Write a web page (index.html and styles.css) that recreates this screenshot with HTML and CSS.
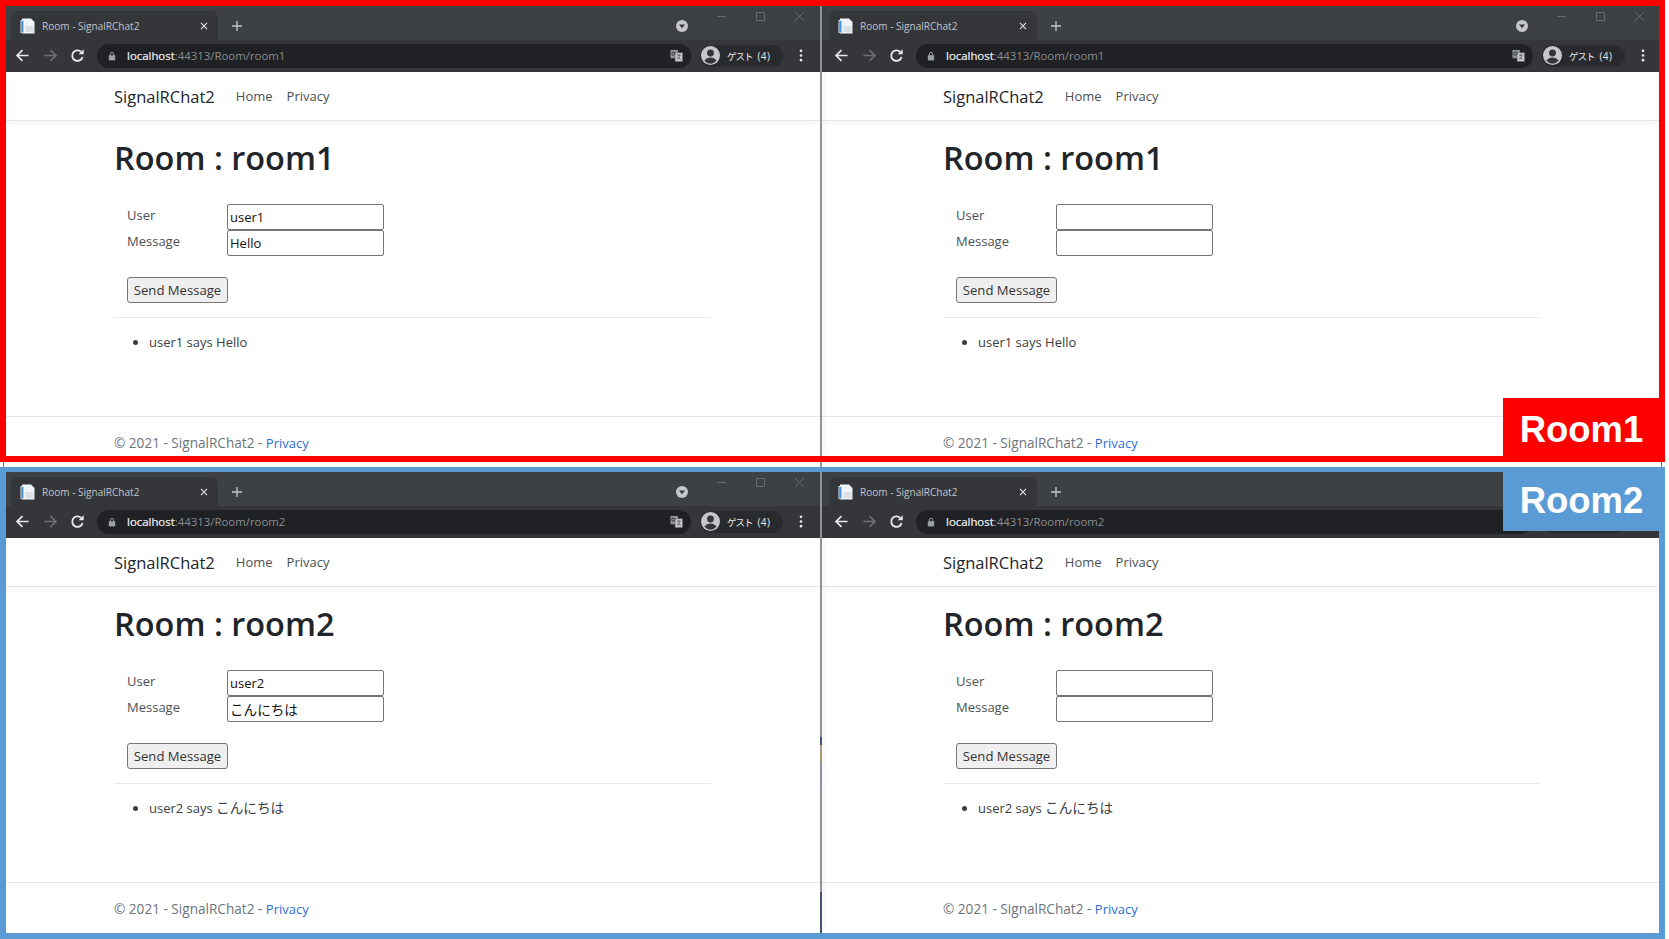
FILE: index.html
```html
<!DOCTYPE html>
<html lang="ja">
<head>
<meta charset="utf-8">
<title>Room - SignalRChat2</title>
<link rel="stylesheet" href="styles.css">
</head>
<body>
<svg class="sprites" width="0" height="0" aria-hidden="true">
  <symbol id="i-fav" viewBox="0 0 15 16">
    <path d="M2 0.5h9l3.5 3.5v11.5H2z" fill="#f1f4f7"/>
    <path d="M0.5 2H4v13H0.5z" fill="#dbe7f2"/>
    <path d="M1.2 3H3.4v11.4H1.2z" fill="#4a97d6"/>
    <path d="M5.5 9h8M5.5 11h8M5.5 13h8" stroke="#c3ccd5" stroke-width="1"/>
  </symbol>
  <symbol id="i-back" viewBox="0 0 16 16">
    <path d="M14.5 8H2.5M8 2.2 2.2 8 8 13.8" fill="none" stroke="currentColor" stroke-width="1.8"/>
  </symbol>
  <symbol id="i-forward" viewBox="0 0 16 16">
    <path d="M1.5 8h12M8 2.2 13.8 8 8 13.8" fill="none" stroke="currentColor" stroke-width="1.8"/>
  </symbol>
  <symbol id="i-reload" viewBox="0 0 16 16">
    <path d="M13.4 9.5A5.6 5.6 0 1 1 12 4.2" fill="none" stroke="currentColor" stroke-width="2"/>
    <path d="M9.2 6.6h5.4V1.2z" fill="currentColor"/>
  </symbol>
  <symbol id="i-lock" viewBox="0 0 10 12">
    <path d="M1 5h8v6.5H1z" fill="currentColor"/>
    <path d="M3 5V3.4a2 2 0 0 1 4 0V5" fill="none" stroke="currentColor" stroke-width="1.2"/>
  </symbol>
  <symbol id="i-translate" viewBox="0 0 14 14">
    <path d="M0.5 1h8v9h-8z" fill="#8f9499"/>
    <path d="M5.5 4h8v9.5h-8z" fill="#c9ccd0" stroke="#5f6368" stroke-width=".6"/>
    <path d="M7.5 6.5h4M9.5 6v1.2M10.8 7c-.4 2-2 3.4-3.4 4M8 8.2c.6 1.2 2 2.4 3.6 3" fill="none" stroke="#3c4043" stroke-width=".8"/>
    <circle cx="3.6" cy="5" r="1.7" fill="none" stroke="#202124" stroke-width=".9"/>
  </symbol>
  <symbol id="i-user" viewBox="0 0 20 20">
    <circle cx="10" cy="10" r="10" fill="#c4c7cb"/>
    <circle cx="10" cy="7.4" r="3.6" fill="#35363a"/>
    <path d="M3.6 15.6C5 12.8 7.6 12 10 12s5 .8 6.4 3.6A8.6 8.6 0 0 1 10 18.6a8.6 8.6 0 0 1-6.4-3z" fill="#35363a"/>
  </symbol>
  <symbol id="i-dots" viewBox="0 0 4 14">
    <circle cx="2" cy="2" r="1.4" fill="currentColor"/>
    <circle cx="2" cy="7" r="1.4" fill="currentColor"/>
    <circle cx="2" cy="12" r="1.4" fill="currentColor"/>
  </symbol>
  <symbol id="i-drop" viewBox="0 0 12 12">
    <circle cx="6" cy="6" r="6" fill="#c4c7cb"/>
    <path d="M3 4.6h6L6 8.2z" fill="#35363a"/>
  </symbol>
  <symbol id="i-x" viewBox="0 0 10 10">
    <path d="M1.2 1.2l7.6 7.6M8.8 1.2 1.2 8.8" fill="none" stroke="currentColor" stroke-width="1.4"/>
  </symbol>
  <symbol id="i-plus" viewBox="0 0 10 10">
    <path d="M5 0v10M0 5h10" fill="none" stroke="currentColor" stroke-width="1.3"/>
  </symbol>
  <symbol id="i-min" viewBox="0 0 10 10">
    <path d="M0 5h10" stroke="currentColor" stroke-width="1"/>
  </symbol>
  <symbol id="i-max" viewBox="0 0 10 10">
    <path d="M.5.5h9v9h-9z" fill="none" stroke="currentColor" stroke-width="1"/>
  </symbol>
  <symbol id="i-close" viewBox="0 0 10 10">
    <path d="M0 0l10 10M10 0 0 10" fill="none" stroke="currentColor" stroke-width="1"/>
  </symbol>
</svg>

<div class="frame frame-red">
  <section class="win win-a">
    <div class="tabstrip">
      <div class="tab"><svg class="fav"><use href="#i-fav"/></svg><span class="tab-title">Room - SignalRChat2</span><svg class="tab-x"><use href="#i-x"/></svg></div>
      <svg class="plus"><use href="#i-plus"/></svg>
      <svg class="drop"><use href="#i-drop"/></svg>
      <div class="controls"><svg class="ctl"><use href="#i-min"/></svg><svg class="ctl"><use href="#i-max"/></svg><svg class="ctl"><use href="#i-close"/></svg></div>
    </div>
    <div class="toolbar">
      <svg class="nav-ic"><use href="#i-back"/></svg><svg class="nav-ic dim"><use href="#i-forward"/></svg><svg class="nav-ic"><use href="#i-reload"/></svg>
      <div class="omni"><svg class="lock"><use href="#i-lock"/></svg><span class="url"><b>localhost</b>:44313/Room/room1</span><svg class="trans"><use href="#i-translate"/></svg></div>
      <div class="pill"><svg class="user"><use href="#i-user"/></svg><span class="who">ゲスト</span><span class="cnt">(4)</span></div>
      <svg class="dots"><use href="#i-dots"/></svg>
    </div>
    <nav class="navbar"><div class="container nav-row"><span class="brand">SignalRChat2</span><span class="nav-link">Home</span><span class="nav-link">Privacy</span></div></nav>
    <main class="container">
      <h1>Room : room1</h1>
      <div class="form-grid"><span class="lbl">User</span><input class="field" value="user1"><span class="lbl">Message</span><input class="field" value="Hello"></div>
      <button class="send">Send Message</button>
      <hr class="rule">
      <ul class="msgs"><li>user1 says Hello</li></ul>
    </main>
    <footer class="foot"><div class="container">© 2021 - SignalRChat2 - <a class="foot-link">Privacy</a></div></footer>
  </section>
  <div class="divider"></div>
  <section class="win win-b">
    <div class="tabstrip">
      <div class="tab"><svg class="fav"><use href="#i-fav"/></svg><span class="tab-title">Room - SignalRChat2</span><svg class="tab-x"><use href="#i-x"/></svg></div>
      <svg class="plus"><use href="#i-plus"/></svg>
      <svg class="drop"><use href="#i-drop"/></svg>
      <div class="controls"><svg class="ctl"><use href="#i-min"/></svg><svg class="ctl"><use href="#i-max"/></svg><svg class="ctl"><use href="#i-close"/></svg></div>
    </div>
    <div class="toolbar">
      <svg class="nav-ic"><use href="#i-back"/></svg><svg class="nav-ic dim"><use href="#i-forward"/></svg><svg class="nav-ic"><use href="#i-reload"/></svg>
      <div class="omni"><svg class="lock"><use href="#i-lock"/></svg><span class="url"><b>localhost</b>:44313/Room/room1</span><svg class="trans"><use href="#i-translate"/></svg></div>
      <div class="pill"><svg class="user"><use href="#i-user"/></svg><span class="who">ゲスト</span><span class="cnt">(4)</span></div>
      <svg class="dots"><use href="#i-dots"/></svg>
    </div>
    <nav class="navbar"><div class="container nav-row"><span class="brand">SignalRChat2</span><span class="nav-link">Home</span><span class="nav-link">Privacy</span></div></nav>
    <main class="container">
      <h1>Room : room1</h1>
      <div class="form-grid"><span class="lbl">User</span><input class="field"><span class="lbl">Message</span><input class="field"></div>
      <button class="send">Send Message</button>
      <hr class="rule">
      <ul class="msgs"><li>user1 says Hello</li></ul>
    </main>
    <footer class="foot"><div class="container">© 2021 - SignalRChat2 - <a class="foot-link">Privacy</a></div></footer>
  </section>
  <div class="badge badge-red">Room1</div>
</div>

<div class="gap"><i class="tick tick-1"></i><i class="tick tick-2"></i><i class="tick tick-3"></i></div>

<div class="frame frame-blue">
  <section class="win win-a">
    <div class="tabstrip">
      <div class="tab"><svg class="fav"><use href="#i-fav"/></svg><span class="tab-title">Room - SignalRChat2</span><svg class="tab-x"><use href="#i-x"/></svg></div>
      <svg class="plus"><use href="#i-plus"/></svg>
      <svg class="drop"><use href="#i-drop"/></svg>
      <div class="controls"><svg class="ctl"><use href="#i-min"/></svg><svg class="ctl"><use href="#i-max"/></svg><svg class="ctl"><use href="#i-close"/></svg></div>
    </div>
    <div class="toolbar">
      <svg class="nav-ic"><use href="#i-back"/></svg><svg class="nav-ic dim"><use href="#i-forward"/></svg><svg class="nav-ic"><use href="#i-reload"/></svg>
      <div class="omni"><svg class="lock"><use href="#i-lock"/></svg><span class="url"><b>localhost</b>:44313/Room/room2</span><svg class="trans"><use href="#i-translate"/></svg></div>
      <div class="pill"><svg class="user"><use href="#i-user"/></svg><span class="who">ゲスト</span><span class="cnt">(4)</span></div>
      <svg class="dots"><use href="#i-dots"/></svg>
    </div>
    <nav class="navbar"><div class="container nav-row"><span class="brand">SignalRChat2</span><span class="nav-link">Home</span><span class="nav-link">Privacy</span></div></nav>
    <main class="container">
      <h1>Room : room2</h1>
      <div class="form-grid"><span class="lbl">User</span><input class="field" value="user2"><span class="lbl">Message</span><input class="field field-ja" value="こんにちは"></div>
      <button class="send">Send Message</button>
      <hr class="rule">
      <ul class="msgs"><li>user2 says <span class="ja">こんにちは</span></li></ul>
    </main>
    <footer class="foot"><div class="container">© 2021 - SignalRChat2 - <a class="foot-link">Privacy</a></div></footer>
  </section>
  <div class="divider divider-dark"></div>
  <section class="win win-b">
    <div class="tabstrip">
      <div class="tab"><svg class="fav"><use href="#i-fav"/></svg><span class="tab-title">Room - SignalRChat2</span><svg class="tab-x"><use href="#i-x"/></svg></div>
      <svg class="plus"><use href="#i-plus"/></svg>
    </div>
    <div class="toolbar">
      <svg class="nav-ic"><use href="#i-back"/></svg><svg class="nav-ic dim"><use href="#i-forward"/></svg><svg class="nav-ic"><use href="#i-reload"/></svg>
      <div class="omni"><svg class="lock"><use href="#i-lock"/></svg><span class="url"><b>localhost</b>:44313/Room/room2</span></div>
      <div class="pill"><svg class="user"><use href="#i-user"/></svg></div>
      <svg class="dots"><use href="#i-dots"/></svg>
    </div>
    <nav class="navbar"><div class="container nav-row"><span class="brand">SignalRChat2</span><span class="nav-link">Home</span><span class="nav-link">Privacy</span></div></nav>
    <main class="container">
      <h1>Room : room2</h1>
      <div class="form-grid"><span class="lbl">User</span><input class="field"><span class="lbl">Message</span><input class="field"></div>
      <button class="send">Send Message</button>
      <hr class="rule">
      <ul class="msgs"><li>user2 says <span class="ja">こんにちは</span></li></ul>
    </main>
    <footer class="foot"><div class="container">© 2021 - SignalRChat2 - <a class="foot-link">Privacy</a></div></footer>
  </section>
  <div class="badge badge-blue">Room2</div>
</div>
</body>
</html>
```

FILE: styles.css
```css
* { box-sizing: border-box; }
html, body { margin: 0; padding: 0; background: #fff; }
body {
  width: 1669px;
  height: 939px;
  overflow: hidden;
  font-family: "Open Sans", "Noto Sans CJK JP", sans-serif;
  color: #212529;
}
.sprites { position: absolute; }

.frame {
  position: relative;
  width: 1665px;
  display: flex;
  border: 6px solid;
  background: #fff;
}
.frame-red { height: 462px; border-color: #ff0000; }
.frame-blue { height: 472px; border-color: #5b9bd5; border-top-width: 5px; }

.gap { position: relative; height: 5px; width: 1665px; }
.tick { position: absolute; top: 0; width: 1px; height: 5px; background: #777; }
.tick-1 { left: 3px; }
.tick-2 { left: 820px; width: 2px; background: #999; }
.tick-3 { left: 1661px; }

.divider {
  flex: none;
  width: 2px;
  background: #8f9296;
  box-shadow: 2px 0 4px rgba(0, 0, 0, .08);
  position: relative;
  z-index: 1;
}
.divider-dark {
  background: linear-gradient(
    #8f9296 0, #8f9296 265px,
    #4a5070 265px, #4a5070 273px,
    #a89a78 273px, #a89a78 291px,
    #8a8da8 291px, #8a8da8 315px,
    #8f9296 315px, #8f9296 420px,
    #4a5070 420px);
}

.win { flex: none; display: flex; flex-direction: column; background: #fff; min-width: 0; }
.win-a { width: 814px; --inset: 5px; --bar: 5px; --tabw: 207px; --right: 16px; --dots: 17px; --page: 108px; }
.win-b { width: 837px; --inset: 7px; --bar: 8px; --tabw: 208px; --right: 15px; --dots: 14px; --page: 121px; }

/* browser chrome */
.tabstrip {
  height: 34px;
  background: #3e4144;
  display: flex;
  align-items: flex-start;
  padding-left: var(--inset);
  flex: none;
}
.tab {
  width: var(--tabw);
  height: 29px;
  margin-top: 5px;
  background: #35363a;
  border-radius: 7px 7px 0 0;
  display: flex;
  align-items: center;
  padding: 0 9px 0 9px;
}
.fav { width: 15px; height: 16px; flex: none; }
.tab-title {
  margin-left: 7px;
  font-size: 10.05px;
  color: #c0c3c8;
  flex: 1;
  white-space: nowrap;
}
.tab-x { width: 8px; height: 8px; color: #dfe1e4; flex: none; margin-right: 1px; }
.plus { width: 10px; height: 10px; color: #c4c7cb; margin: 15px 0 0 14px; flex: none; }
.drop { width: 12px; height: 12px; margin: 14px 0 0 auto; flex: none; }
.controls { display: flex; gap: 30px; margin: 6px var(--right) 0 29px; flex: none; }
.ctl { width: 9px; height: 9px; color: #6d7073; }

.toolbar {
  height: 32px;
  background: #35363a;
  display: flex;
  align-items: center;
  padding: 0 0 1px var(--bar);
  flex: none;
}
.nav-ic { width: 15px; height: 15px; color: #e8eaed; margin-left: 4px; margin-right: 9px; flex: none; }
.nav-ic.dim { color: #6d7074; margin-left: 4px; margin-right: 9px; }
.nav-ic.dim + .nav-ic { margin-left: 3px; }
.omni {
  flex: 1;
  height: 24px;
  margin-left: 3px;
  background: #202124;
  border-radius: 12px;
  display: flex;
  align-items: center;
  padding: 0 8px 0 11px;
  min-width: 0;
}
.lock { width: 8px; height: 10px; color: #9aa0a6; flex: none; }
.url { margin-left: 11px; font-size: 11.4px; color: #8a8d91; flex: 1; white-space: nowrap; }
.url b { font-weight: 400; color: #f1f3f4; -webkit-text-stroke: .2px #f1f3f4; }
.trans { width: 13px; height: 13px; flex: none; }
.pill {
  width: 83px;
  height: 22px;
  margin-left: 9px;
  background: #292a2d;
  border-radius: 11px;
  display: flex;
  align-items: center;
  padding-left: 1px;
  font-size: 9.5px;
  color: #e8eaed;
  flex: none;
  white-space: nowrap;
}
.who { margin-left: 7px; letter-spacing: -1px; }
.cnt { margin-left: 5px; font-size: 10px; letter-spacing: .4px; }
.user { width: 19px; height: 19px; flex: none; }
.dots { width: 4px; height: 13px; color: #e8eaed; margin: 0 var(--dots) 0 16px; flex: none; }

/* page */
.container { width: 597px; margin: 0 0 0 var(--page); flex: none; }
.navbar {
  height: 49px;
  border-bottom: 1px solid #e6e6e6;
  box-shadow: 0 3px 8px rgba(0, 0, 0, .04);
  display: flex;
  align-items: center;
  flex: none;
}
.nav-row { display: flex; align-items: center; }
.brand { font-size: 16.5px; color: #212529; margin-right: 21px; white-space: nowrap; }
.nav-link { font-size: 13px; color: #4b4f54; margin-right: 14px; white-space: nowrap; }

h1 {
  margin: 16px 0 0;
  font-size: 32.5px;
  line-height: 41px;
  font-weight: 600;
  color: #212529;
  white-space: nowrap;
}
.form-grid {
  margin: 26px 0 0 13px;
  display: grid;
  grid-template-columns: 100px 157px;
  grid-auto-rows: 26px;
  font-size: 13px;
}
.lbl { color: #4b4f54; line-height: 22px; }
.field {
  width: 157px;
  height: 26px;
  border: 1px solid #767676;
  border-radius: 2px;
  padding: 0 2px;
  font: 13px "Open Sans", "Noto Sans CJK JP", sans-serif;
  color: #111;
  background: #fff;
}
.field-ja { font-size: 13.6px; }
.send {
  display: block;
  width: 101px;
  height: 26px;
  margin: 21px 0 0 13px;
  padding: 0;
  border: 1px solid #767676;
  border-radius: 3px;
  background: #efefef;
  font: 13.1px "Open Sans", sans-serif;
  color: #333;
}
.rule { margin: 14px 0 0; border: 0; border-top: 1px solid #e9e9e9; }
.msgs { margin: 14px 0 0; padding: 0 0 0 35px; font-size: 13px; line-height: 20px; color: #3a3d41; }
.ja { font-size: 13.6px; }
.foot {
  margin-top: 64px;
  border-top: 1px solid #e2e6ea;
  padding-top: 16px;
  font-size: 13.6px;
  line-height: 20px;
  color: #6c757d;
  flex: none;
  white-space: nowrap;
}
.foot-link { color: #2a6fd6; font-size: 13px; }

.badge {
  position: absolute;
  right: -6px;
  width: 162px;
  height: 64px;
  display: flex;
  align-items: center;
  justify-content: center;
  padding-right: 5px;
  color: #fff;
  font: 700 36.5px "Liberation Sans", Arial, sans-serif;
  z-index: 2;
}
.badge-red { bottom: -6px; background: #ff0000; }
.badge-blue { top: -5px; background: #5b9bd5; padding-top: 3px; }
```
